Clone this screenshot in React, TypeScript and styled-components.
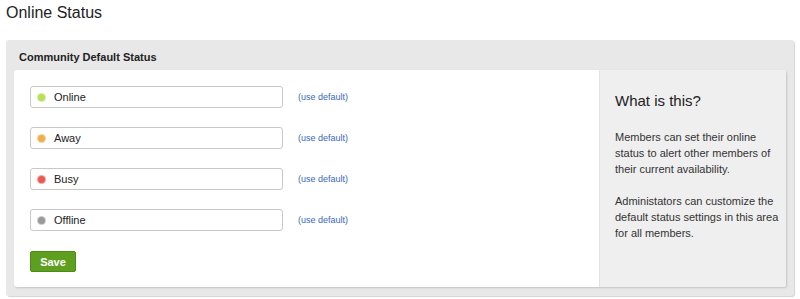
import styled, { createGlobalStyle } from 'styled-components';

const GlobalStyle = createGlobalStyle`
	body {
		margin: 0;
		background: #fff;
		font-family: Arial, 'Liberation Sans', sans-serif;
		color: #333;
	}
`;

const Page = styled.div`
	width: 800px;
	height: 299px;
	padding: 0 6px;
	box-sizing: border-box;
	overflow: hidden;
`;

const Title = styled.h1`
	margin: 0;
	padding: 4px 0 0 0;
	height: 40px;
	box-sizing: border-box;
	font-size: 16px;
	font-weight: normal;
	color: #222;
`;

const Panel = styled.div`
	background: #e8e8e8;
	border-radius: 3px;
	box-shadow: 1px 1px 1px #d4d4d4;
	padding: 0 8px 9px 8px;
	width: 788px;
	box-sizing: border-box;
`;

const PanelHead = styled.div`
	height: 30px;
	padding-left: 5px;
	padding-top: 4px;
	box-sizing: border-box;
	display: flex;
	align-items: center;
	font-size: 11px;
	font-weight: bold;
	color: #222;
`;

const Card = styled.div`
	display: flex;
	background: #fff;
	border-radius: 3px;
	box-shadow: 1px 1px 2px #c4c4c4;
	height: 217px;
	overflow: hidden;
`;

const Main = styled.div`
	flex: 1;
	padding: 16px 0 0 16px;
`;

const Row = styled.div`
	display: flex;
	align-items: center;
	margin-bottom: 19px;
`;

const Field = styled.div`
	display: flex;
	align-items: center;
	width: 253px;
	height: 22px;
	box-sizing: border-box;
	border: 1px solid #c8c8c8;
	border-radius: 3px;
	padding-left: 5px;
	font-size: 11px;
	color: #222;
`;

const Dot = styled.span<{ $color: string; $ring: string }>`
	width: 7px;
	height: 7px;
	border-radius: 50%;
	background: ${p => p.$color};
	box-shadow: 0 0 0 1px ${p => p.$ring};
	margin: 0 9px 0 2px;
`;

const DefaultLink = styled.a`
	margin-left: 15px;
	font-size: 9px;
	color: #3a68c0;
	text-decoration: none;
`;

const SaveButton = styled.button`
	margin-top: 1px;
	width: 46px;
	height: 21px;
	background: #5f9f1f;
	border: 1px solid #4d8a17;
	border-radius: 2px;
	color: #fff;
	font-family: Arial, 'Liberation Sans', sans-serif;
	font-weight: bold;
	font-size: 11px;
	padding: 0;
`;

const Side = styled.div`
	width: 187px;
	background: #efefef;
	border-left: 1px solid #e2e2e2;
	padding: 22px 4px 0 15px;
	box-sizing: border-box;
`;

const SideTitle = styled.h2`
	margin: 0 0 20px 0;
	font-size: 15px;
	font-weight: normal;
	color: #222;
`;

const SideText = styled.p`
	margin: 0 0 16px 0;
	font-size: 11px;
	line-height: 16px;
	color: #333;
`;

const statuses = [
	{ label: 'Online', color: '#b6e05a', ring: '#d8ef9f' },
	{ label: 'Away', color: '#eeb04e', ring: '#f6d49a' },
	{ label: 'Busy', color: '#ea5a52', ring: '#f4a6a0' },
	{ label: 'Offline', color: '#9a9a9a', ring: '#cccccc' },
];

export default function App() {
	return (
		<>
			<GlobalStyle />
			<Page>
				<Title>Online Status</Title>
				<Panel>
					<PanelHead>Community Default Status</PanelHead>
					<Card>
						<Main>
							{statuses.map(s => (
								<Row key={s.label}>
									<Field>
										<Dot $color={s.color} $ring={s.ring} />
										{s.label}
									</Field>
									<DefaultLink href='#'>(use default)</DefaultLink>
								</Row>
							))}
							<SaveButton>Save</SaveButton>
						</Main>
						<Side>
							<SideTitle>What is this?</SideTitle>
							<SideText>
								Members can set their online status to alert other members of
								their current availability.
							</SideText>
							<SideText>
								Administators can customize the default status settings in this
								area for all members.
							</SideText>
						</Side>
					</Card>
				</Panel>
			</Page>
		</>
	);
}
